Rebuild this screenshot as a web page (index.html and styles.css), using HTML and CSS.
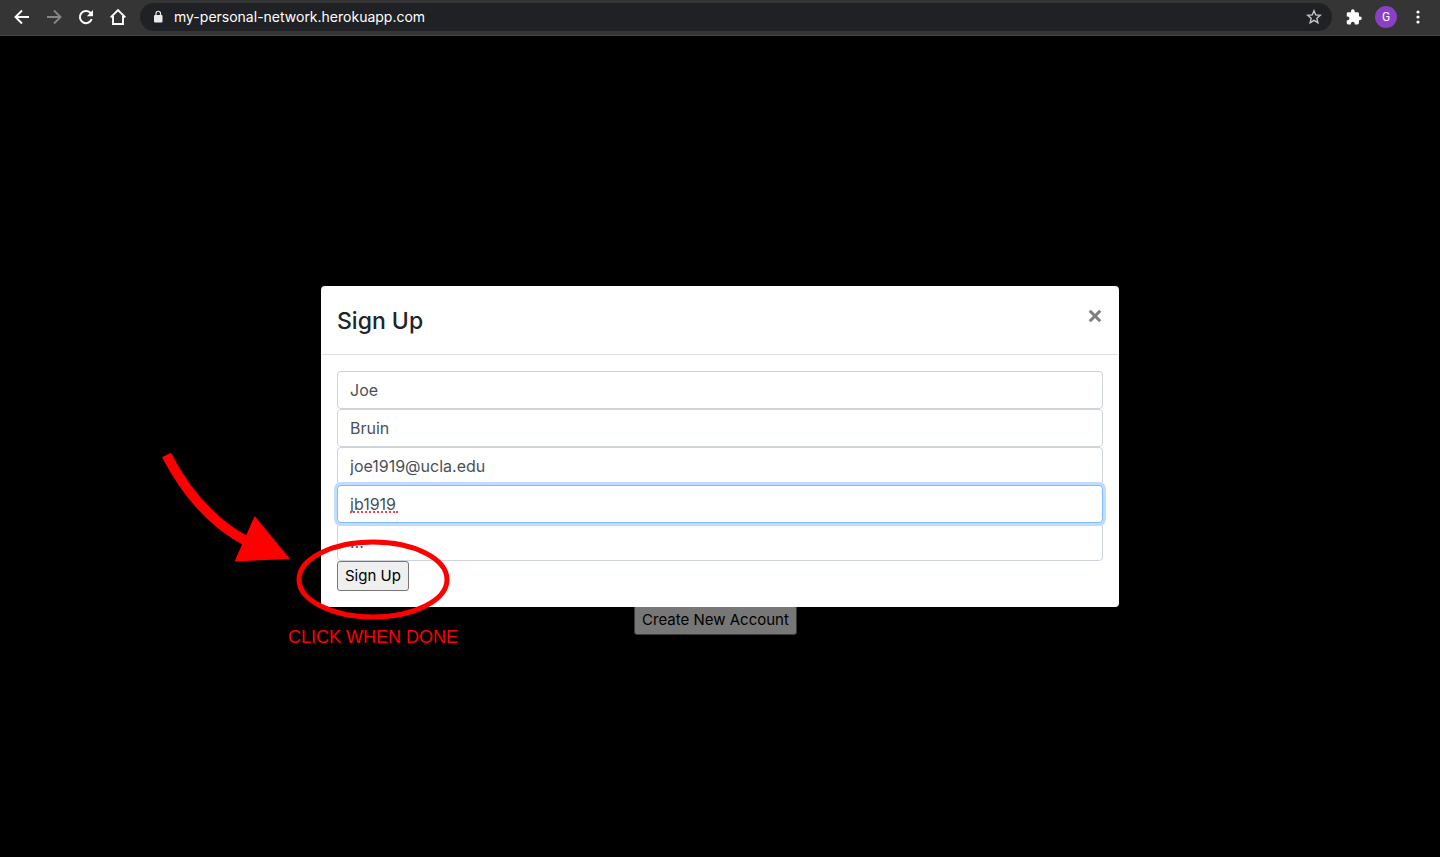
FILE: index.html
```html
<!DOCTYPE html>
<html lang="en">
<head>
<meta charset="utf-8">
<title>My Personal Network</title>
<link rel="stylesheet" href="styles.css">
</head>
<body>
<header class="toolbar">
  <nav class="nav-buttons" aria-label="Browser">
    <button class="icon-button" type="button" aria-label="Back"><svg class="icon" viewBox="0 0 20 20"><path d="M17 10H4M10 3.5 3.5 10l6.500 6.500" fill="none" stroke="#fff" stroke-width="1.900"/></svg></button>
    <button class="icon-button" type="button" aria-label="Forward"><svg class="icon" viewBox="0 0 20 20"><path d="M3 10h13M10 3.500 16.500 10 10 16.500" fill="none" stroke="#868686" stroke-width="1.900"/></svg></button>
    <button class="icon-button" type="button" aria-label="Reload"><svg class="icon" viewBox="0 0 20 20"><path d="M15.700 12.200A6.100 6.100 0 1 1 14.300 5.700L16 7.400" fill="none" stroke="#fff" stroke-width="2"/><path d="M17 3v6.200h-6.200z" fill="#fff"/></svg></button>
    <button class="icon-button" type="button" aria-label="Home"><svg class="icon" viewBox="0 0 20 20"><path d="M2.700 10.300 10 3l7.300 7.300M5 9v8h10V9" fill="none" stroke="#fff" stroke-width="1.900"/></svg></button>
  </nav>
  <div class="address">
    <svg class="lock" viewBox="0 0 10 14"><rect x="1" y="5" width="8.500" height="7.500" rx="1" fill="#e8eaed"/><path d="M3 5.500V3.500a2.250 2.250 0 0 1 4.500 0v2" fill="none" stroke="#e8eaed" stroke-width="1.200"/></svg>
    <input class="url" type="text" aria-label="Address" value="my-personal-network.herokuapp.com">
    <button class="star-button" type="button" aria-label="Bookmark"><svg class="star" viewBox="0 0 16 16"><path d="m8 1.800 1.750 4.150 4.500.4-3.400 2.950 1.020 4.400L8 11.370 4.130 13.700l1.020-4.400-3.400-2.950 4.500-.4z" fill="none" stroke="#c4c7ca" stroke-width="1.400"/></svg></button>
  </div>
  <div class="actions">
    <button class="icon-button" type="button" aria-label="Extensions"><svg class="icon" viewBox="0 0 24 24"><path d="M19.200 11.400h-1.300V8a1.700 1.700 0 0 0-1.700-1.700h-3.400V5a2.200 2.200 0 0 0-4.400 0v1.300H5A1.700 1.700 0 0 0 3.300 8v3.300h1.300a2.400 2.400 0 0 1 0 4.700H3.300v3.300A1.700 1.700 0 0 0 5 21h3.200v-1.300a2.400 2.400 0 0 1 4.700 0V21h3.300a1.700 1.700 0 0 0 1.700-1.700v-3.500h1.300a2.200 2.200 0 0 0 0-4.400z" fill="#fff"/></svg></button>
    <button class="avatar" type="button" aria-label="Profile">G</button>
    <button class="icon-button" type="button" aria-label="Menu"><svg class="icon" viewBox="0 0 20 20"><g fill="#fff"><circle cx="10" cy="5" r="1.600"/><circle cx="10" cy="10" r="1.600"/><circle cx="10" cy="15" r="1.600"/></g></svg></button>
  </div>
</header>
<main class="page">
  <button class="button button-dimmed" type="button">Create New Account</button>
  <div class="overlay">
    <section class="modal" role="dialog" aria-labelledby="modal-title">
      <div class="modal-header">
        <h1 class="modal-title" id="modal-title">Sign Up</h1>
        <button class="close" type="button" aria-label="Close"><svg class="close-icon" viewBox="0 0 12 12"><path d="m1.500 1.500 9 9m0-9-9 9" stroke="#7f7f7f" stroke-width="2.600"/></svg></button>
      </div>
      <form class="modal-body">
        <input class="field" type="text" aria-label="First name" value="Joe">
        <input class="field" type="text" aria-label="Last name" value="Bruin">
        <input class="field" type="email" aria-label="Email" value="joe1919@ucla.edu">
        <div class="field-wrap">
          <input class="field field-active" type="text" aria-label="Username" value="jb1919" spellcheck="false">
          <span class="spelling"></span>
        </div>
        <input class="field" type="text" aria-label="Password" value="...">
        <button class="button" type="button">Sign Up</button>
      </form>
      <div class="callout">
        <svg class="callout-art" viewBox="0 0 300 180" aria-hidden="true">
          <path d="M16.500 15Q48 76 98 102" fill="none" stroke="red" stroke-width="10"/>
          <path d="M104.700 76 140 119 84.500 121.500z" fill="red"/>
          <ellipse cx="223" cy="139.500" rx="74" ry="37.500" fill="none" stroke="red" stroke-width="5"/>
        </svg>
        <p class="callout-text">CLICK WHEN DONE</p>
      </div>
    </section>
  </div>
</main>
</body>
</html>
```
FILE: styles.css
```css
* { box-sizing: border-box; }

body {
  margin: 0;
  min-height: 100vh;
  display: flex;
  flex-direction: column;
  background: #000;
  color: #212529;
  font: 16px/24px Inter, "Liberation Sans", sans-serif;
}

button, input { font: inherit; }

.toolbar {
  display: flex;
  align-items: center;
  gap: 8px;
  height: 36px;
  padding: 0 12px 2px;
  background: #353535;
  border-bottom: 1px solid #454545;
}

.nav-buttons, .actions { display: flex; align-items: center; gap: 12px; }

.icon-button, .star-button, .close {
  display: flex;
  padding: 0;
  border: 0;
  background: none;
}

.icon { width: 20px; height: 20px; }

.address {
  flex: 1;
  display: flex;
  align-items: center;
  height: 28px;
  margin-left: 4px;
  padding: 0 10px 0 13px;
  border-radius: 14px;
  background: #202124;
}

.lock { width: 10px; height: 14px; }

.url {
  flex: 1;
  min-width: 0;
  height: 24px;
  margin-left: 11px;
  padding: 0;
  border: 0;
  background: none;
  color: #fff;
  font-size: 14px;
}

.star { width: 16px; height: 16px; }

.actions { gap: 11px; margin-left: 4px; }

.avatar {
  width: 22px;
  height: 22px;
  padding: 0;
  border: 0;
  border-radius: 50%;
  background: #8b3fc4;
  color: #fff;
  font: 12px/22px Roboto, sans-serif;
}

.page {
  position: relative;
  flex: 1;
  display: flex;
  flex-direction: column;
  align-items: center;
  padding: 569px 9px 0 0;
}

.button {
  height: 30px;
  padding: 0 7px;
  border: 1px solid #767676;
  border-radius: 3px;
  background: #efefef;
  color: #000;
  font-size: 15px;
}

.button-dimmed { background: #777; border-color: #3b3b3b; }

.overlay {
  position: absolute;
  inset: 0;
  display: flex;
  align-items: center;
  justify-content: center;
}

.modal {
  position: relative;
  width: 100%;
  max-width: 798px;
  border-radius: 4px;
  background: #fff;
}

.modal-header {
  display: flex;
  justify-content: space-between;
  align-items: flex-start;
  padding: 16px;
  border-bottom: 1px solid #dee2e6;
}

.modal-title {
  margin: 0;
  padding-top: 2px;
  font-size: 23px;
  line-height: 34px;
  font-weight: 500;
}

.close { padding: 7px 1px; }

.close-icon { width: 14px; height: 14px; }

.modal-body {
  display: flex;
  flex-direction: column;
  align-items: flex-start;
  padding: 16px;
}

.field {
  display: block;
  width: 100%;
  height: 38px;
  padding: 6px 12px;
  border: 1px solid #ced4da;
  border-radius: 4px;
  background: #fff;
  color: #495057;
}

.field-wrap { position: relative; z-index: 1; width: 100%; }

.field-active {
  border-color: #80bdff;
  box-shadow: 0 0 0 3px #bfdeff;
}

.spelling {
  position: absolute;
  left: 13px;
  top: 26px;
  width: 48px;
  border-bottom: 2px dotted #e5484d;
}

.callout {
  position: absolute;
  z-index: 2;
  left: -171px;
  top: 154px;
  width: 300px;
  pointer-events: none;
}

.callout-art { display: block; width: 300px; height: 180px; }

.callout-text {
  margin: 5px 0 0 138px;
  color: red;
  font: 18px/24px "Liberation Sans", Arial, sans-serif;
  white-space: nowrap;
}
```
